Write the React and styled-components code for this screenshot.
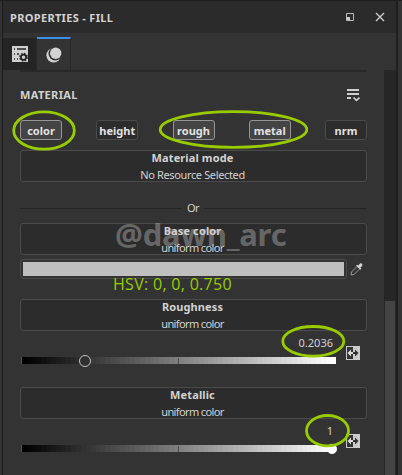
import React from 'react';
import styled, { createGlobalStyle } from 'styled-components';

const Global = createGlobalStyle`
  * { box-sizing: border-box; }
  body { margin: 0; background: #333; overflow: hidden; }
`;

const Frame = styled.div`
  position: relative;
  width: 402px;
  height: 475px;
  padding: 0 4px 0 2px;
  border-top: 1px solid #1e1e1e;
  background: #333;
  color: #d2d2d2;
  font: 11px/16px "Noto Sans", sans-serif;
  overflow: hidden;
`;

const Panel = styled.section`
  height: 474px;
  display: flex;
  flex-direction: column;
  border-left: 1px solid #1c1c1c;
  border-right: 2px solid #1e1e1e;
`;

const TitleBar = styled.header`
  height: 32px;
  flex: none;
  display: flex;
  align-items: center;
  padding: 0 11px 0 7px;
  background: #2b2b2b;
`;

const Label = styled.span`
  display: block;
  white-space: nowrap;
  font-weight: ${p => (p.$bold ? 700 : 400)};
  letter-spacing: ${p => p.$track || 0}px;
`;

const PanelTitle = styled(Label)`
  padding-top: 2px;
`;

const WindowIcons = styled.div`
  margin-left: auto;
  display: flex;
  gap: 20px;
  svg { display: block; }
`;

const Tabs = styled.nav`
  height: 37px;
  flex: none;
  display: flex;
  align-items: flex-end;
`;

const Tab = styled.div`
  width: 34px;
  height: ${p => (p.$active ? 33 : 32)}px;
  display: flex;
  align-items: center;
  justify-content: center;
  background: ${p => (p.$active ? '#333' : '#242424')};
  border-top: ${p => (p.$active ? '2px solid #3b8fe8' : '0')};
  border-right: 1px solid #292929;
`;

const Body = styled.div`
  flex: 1;
  display: flex;
  min-height: 0;
`;

const Content = styled.main`
  width: 347px;
  margin: 0 17px;
  border-top: 2px solid #282828;
`;

const ScrollTrack = styled.div`
  width: 12px;
  padding: 231px 1px 0;
  background: #262626;
`;

const ScrollThumb = styled.div`
  height: 200px;
  background: #444;
`;

const Heading = styled.div`
  height: 48px;
  padding: 0 7px 3px 0;
  display: flex;
  align-items: center;
  justify-content: space-between;
`;

const Channels = styled.div`
  display: flex;
  justify-content: space-between;
  height: 20px;
`;

const Channel = styled.button`
  width: 42px;
  height: 20px;
  padding: 1px 0 0;
  display: flex;
  align-items: center;
  justify-content: center;
  border: 1px solid ${p => (p.$on ? '#969696' : '#4a4a4a')};
  border-radius: 3px;
  background: ${p => (p.$on ? '#444' : '#2c2c2c')};
  color: #e2e2e2;
  font: inherit;
`;

const Resource = styled.div`
  height: 32px;
  margin-top: ${p => p.$gap || 0}px;
  padding-right: 2px;
  display: flex;
  flex-direction: column;
  align-items: center;
  border: 1px solid #4b4b4b;
  border-radius: 3px;
  background: #2c2c2c;
  line-height: 17px;
  ${Label} { flex: none; height: 17px; position: relative; z-index: 1; }
  ${Label}:first-child { height: 15px; line-height: 13px; }
`;

const Divider = styled.div`
  height: 16px;
  margin-top: 18px;
  display: flex;
  align-items: center;
  gap: 5px;
  &::before, &::after { content: ""; flex: 1; height: 1px; background: #242424; }
  &::before { margin-right: 0; flex: 0 0 162px; }
`;

const SwatchRow = styled.div`
  margin-top: 4px;
  height: 20px;
  display: flex;
  align-items: center;
  gap: 2px;
`;

const Swatch = styled.div`
  width: 327px;
  height: 20px;
  padding: 2px;
  border: 1px solid #4c4c4c;
  border-radius: 3px;
  background: #bfbfbf content-box;
`;

const Control = styled.div`
  height: 56px;
  display: grid;
  grid-template-columns: 316px 15px;
  grid-template-rows: 26px 8px;
  column-gap: 9px;
  padding-left: 1px;
`;

const Value = styled.div`
  grid-column: 1;
  padding: 4px 4px 0 0;
  display: flex;
  justify-content: flex-end;
`;

const LinkSlot = styled.div`
  grid-column: 2;
  grid-row: 1 / 3;
  padding-top: 15px;
  svg { display: block; }
`;

const bands = Array.from({ length: 64 }, (_, i) => {
  const v = Math.round((i / 63) * 255);
  return `rgb(${v},${v},${v}) ${(i / 64) * 100}% ${((i + 1) / 64) * 100}%`;
}).join(',');

const Slider = styled.div`
  position: relative;
  grid-column: 1;
  grid-row: 2;
  width: 315px;
  height: 7px;
  background: linear-gradient(90deg, ${bands});
  border-left: 1px solid #555;
  &::after {
    content: "";
    position: absolute;
    left: 156px;
    top: 1px;
    width: 1px;
    height: 6px;
    background: #4b4b4b;
  }
`;

const Handle = styled.i`
  position: absolute;
  z-index: 1;
  top: -2px;
  left: ${p => p.$at}px;
  width: 12px;
  height: 12px;
  border-radius: 50%;
  border: 1.5px solid ${p => (p.$full ? '#f4f4f4' : '#c4c4c4')};
  background: ${p => (p.$full ? '#fff' : '#303030')};
  transform: scale(${p => (p.$full ? 0.85 : 1)});
`;

const Watermark = styled.div`
  position: absolute;
  z-index: 0;
  left: 115px;
  top: 213px;
  color: rgba(200, 200, 200, 0.4);
  font: 700 31px/40px "Noto Sans", sans-serif;
  letter-spacing: -0.2px;
  white-space: nowrap;
`;

const Note = styled.div`
  position: absolute;
  left: 113px;
  top: 272px;
  color: #9c0;
  font: 16px/22px "Open Sans", sans-serif;
  letter-spacing: 0.3px;
  white-space: nowrap;
`;

const Marks = styled.svg`
  position: absolute;
  z-index: 2;
  left: 0;
  top: -1px;
  fill: none;
  stroke: #9c0;
  stroke-width: 2.8;
`;

const LinkIcon = () => (
  <svg width="14" height="14" viewBox="0 0 14 14">
    <path d="M0 0H14V14H0Z" fill="#cbcbcb" />
    <path d="M1 1H7V13H1Z" fill="#333" />
    <path d="M1.500 7L5 3.500V6H7V8H5V10.500Z" fill="#ddd" />
    <path d="M12.500 7L9 3.500V6H7V8H9V10.500Z" fill="#2d2d2d" />
  </svg>
);

const Box = ({ title, sub, gap, track = -0.62 }) => (
  <Resource $gap={gap}>
    <Label $bold $track={0.12}>{title}</Label>
    <Label $track={track}>{sub}</Label>
  </Resource>
);

const SliderControl = ({ value, at, full }) => (
  <Control>
    <Value><Label>{value}</Label></Value>
    <LinkSlot><LinkIcon /></LinkSlot>
    <Slider><Handle $at={at} $full={full} /></Slider>
  </Control>
);

const channels = [['color', true], ['height', false], ['rough', true], ['metal', true], ['nrm', false]];

export default function App() {
  return (
    <>
      <Global />
      <Frame>
        <Panel>
          <TitleBar>
            <PanelTitle $bold $track={0.33}>PROPERTIES - FILL</PanelTitle>
            <WindowIcons>
              <svg width="10" height="10" viewBox="0 0 10 10">
                <path d="M1.500 1.500H8.500V8.500H1.500Z" fill="none" stroke="#bbb" />
                <path d="M2 5H5V8H2Z" fill="#ccc" />
              </svg>
              <svg width="10" height="10" viewBox="0 0 10 10">
                <path d="M1 1L9 9M9 1L1 9" stroke="#ccc" strokeWidth="1.4" />
              </svg>
            </WindowIcons>
          </TitleBar>
          <Tabs>
            <Tab>
              <svg width="16" height="16" viewBox="0 0 16 16">
                <path d="M0 0H16V16H0Z" fill="#d0d0d0" />
                <path d="M2 3H3M5 3H14M2 8H3M5 8H7M2 13H3M5 13H6" stroke="#242424" strokeWidth="1.3" />
                <circle cx="11.500" cy="11.200" r="3.500" fill="none" stroke="#242424" strokeWidth="1.800" strokeDasharray="1.500 1.250" />
                <circle cx="11.500" cy="11.200" r="2.600" fill="none" stroke="#242424" strokeWidth="1.700" />
              </svg>
            </Tab>
            <Tab $active>
              <svg width="16" height="16" viewBox="0 0 16 16">
                <circle cx="7.600" cy="8.300" r="7.200" fill="#d2d2d2" />
                <circle cx="9.300" cy="6.600" r="6.800" fill="#333" />
                <circle cx="9.700" cy="6.200" r="5.700" fill="#d2d2d2" />
              </svg>
            </Tab>
          </Tabs>
          <Body>
            <Content>
              <Heading>
                <Label $bold $track={0.35}>MATERIAL</Label>
                <svg width="13" height="14" viewBox="0 0 13 14">
                  <path d="M0 2H12M0 6H12M0 10H4" stroke="#d0d0d0" strokeWidth="2" />
                  <path d="M6.500 9.500L9.500 12.300L12.500 9.500" fill="none" stroke="#d0d0d0" strokeWidth="1.700" />
                </svg>
              </Heading>
              <Channels>
                {channels.map(([name, on]) => (
                  <Channel key={name} $on={on}><Label $bold>{name}</Label></Channel>
                ))}
              </Channels>
              <Box gap={10} title="Material mode" sub="No Resource Selected" track={-0.36} />
              <Divider><Label $track={-0.5}>Or</Label></Divider>
              <Box gap={7} title="Base color" sub="uniform color" />
              <SwatchRow>
                <Swatch />
                <svg width="16" height="16" viewBox="0 0 16 16">
                  <path d="M8 5.500L2.500 11L2 14L5 13.500L10.500 8" fill="#333" stroke="#999" strokeWidth="1" />
                  <path d="M7 4.800L8.200 3.800L9.200 4.500L10.800 2.800C12.300 1.500 14.300 3.300 13.100 4.900L11.500 6.600L12.300 7.700L11.300 8.700Z" fill="#d0d0d0" />
                </svg>
              </SwatchRow>
              <Box gap={20} title="Roughness" sub="uniform color" />
              <SliderControl value="0.2036" at={57} />
              <Box title="Metallic" sub="uniform color" />
              <SliderControl value="1" at={304} full />
            </Content>
            <ScrollTrack><ScrollThumb /></ScrollTrack>
          </Body>
        </Panel>
        <Watermark>@dawn_arc</Watermark>
        <Note>HSV: 0, 0, 0.750</Note>
        <Marks width="402" height="475" viewBox="0 0 402 475">
          <ellipse cx="44" cy="130.500" rx="30.300" ry="18.700" />
          <ellipse cx="233.500" cy="129.500" rx="73.300" ry="17.800" />
          <ellipse cx="313.300" cy="341.300" rx="30.500" ry="14.800" />
          <ellipse cx="327.500" cy="430.700" rx="21" ry="15.200" />
        </Marks>
      </Frame>
    </>
  );
}
